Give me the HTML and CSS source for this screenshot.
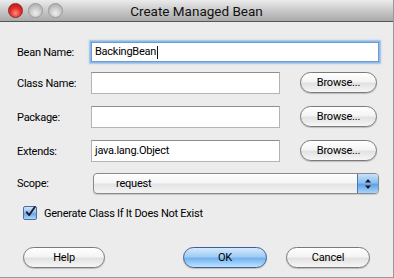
FILE: index.html
```html
<!DOCTYPE html>
<html>
<head>
<meta charset="utf-8">
<link rel="stylesheet" href="styles.css">
</head>
<body>
<div class="window">
  <div class="titlebar">
    <div class="lights">
      <span class="light red"></span>
      <span class="light gray"></span>
      <span class="light gray"></span>
    </div>
    <div class="title">Create Managed Bean</div>
  </div>
  <div class="content">
    <div class="row r1">
      <label class="lbl">Bean Name:</label>
      <div class="field wide focus">BackingBean<span class="caret"></span></div>
    </div>
    <div class="row r2">
      <label class="lbl">Class Name:</label>
      <div class="field"></div>
      <div class="btn browse">Browse...</div>
    </div>
    <div class="row r3">
      <label class="lbl">Package:</label>
      <div class="field"></div>
      <div class="btn browse">Browse...</div>
    </div>
    <div class="row r4">
      <label class="lbl">Extends:</label>
      <div class="field">java.lang.Object</div>
      <div class="btn browse">Browse...</div>
    </div>
    <div class="row r5">
      <label class="lbl">Scope:</label>
      <div class="select">
        <span class="sel-text">request</span>
        <span class="stepper">
          <svg width="8" height="12" viewBox="0 0 8 12"><path d="M4 1 L7 4.5 L1 4.5 Z M4 11 L7 7.5 L1 7.5 Z" fill="#1a1a1a"/></svg>
        </span>
      </div>
    </div>
    <div class="check-row">
      <span class="checkbox">
        <svg width="14" height="14" viewBox="0 0 14 14"><path d="M3.2 7.2 L6 10.6 L12.6 1.2" fill="none" stroke="#1b1f3a" stroke-width="2.2" stroke-linecap="round" stroke-linejoin="round"/></svg>
      </span>
      <span class="check-text">Generate Class If It Does Not Exist</span>
    </div>
    <div class="actions">
      <div class="btn help">Help</div>
      <div class="spacer"></div>
      <div class="btn ok">OK</div>
      <div class="btn cancel">Cancel</div>
    </div>
  </div>
</div>
</body>
</html>
```
FILE: styles.css
```css
html, body {
  margin: 0;
  padding: 0;
}
body {
  width: 394px;
  height: 278px;
  overflow: hidden;
  font-family: Roboto, "Liberation Sans", sans-serif;
  font-size: 11px;
  color: #000;
}
.window {
  width: 394px;
  height: 278px;
  box-sizing: border-box;
  background: #ececec;
  border-right: 1px solid #9a9a9a;
  border-bottom: 1px solid #9a9a9a;
  display: flex;
  flex-direction: column;
}
.titlebar {
  height: 22px;
  box-sizing: border-box;
  background: linear-gradient(#ebebeb, #c9c9c9 50%, #a9a9a9);
  border-bottom: 1px solid #565656;
  position: relative;
  display: flex;
  align-items: center;
}
.lights {
  display: flex;
  gap: 5px;
  padding-left: 8px;
}
.light {
  width: 15px;
  height: 15px;
  border-radius: 50%;
  box-sizing: border-box;
}
.light.red {
  background: radial-gradient(circle at 50% 70%, #ff8c86 0%, #e8302a 45%, #a5120d 100%);
  border: 1px solid #8c2a26;
}
.light.gray {
  background: radial-gradient(circle at 50% 70%, #eeeeee 0%, #c8c8c8 50%, #a0a0a0 100%);
  border: 1px solid #9a9a9a;
}
.title {
  position: absolute;
  left: 0;
  right: 0;
  top: 3px;
  text-align: center;
  font-size: 13.5px;
  color: #111;
}
.content {
  padding-left: 17px;
  flex: 1;
  display: flex;
  flex-direction: column;
}
.row {
  display: flex;
  align-items: center;
}
.r1 { margin-top: 20px; height: 20px; }
.r2 { margin-top: 10px; height: 22px; }
.r3 { margin-top: 12px; height: 22px; }
.r4 { margin-top: 12px; height: 22px; }
.r5 { margin-top: 11px; height: 21px; }
.lbl {
  width: 74px;
  flex: none;
  letter-spacing: -0.25px;
}
.field {
  width: 189px;
  height: 22px;
  box-sizing: border-box;
  background: #fff;
  border: 1px solid #b4b4b4;
  border-top-color: #8e8e8e;
  padding-left: 3px;
  line-height: 20px;
  letter-spacing: -0.25px;
  flex: none;
}
.field.wide {
  width: 288px;
  height: 20px;
  line-height: 18px;
  border: 1px solid #6d9cd4;
  box-shadow: 0 0 0 1.5px #8fb8e6, 0 0 2px 2px #b6d2f0;
}
.caret {
  display: inline-block;
  width: 1px;
  height: 13px;
  background: #111;
  vertical-align: middle;
  margin-left: 1px;
}
.btn {
  box-sizing: border-box;
  height: 21px;
  border-radius: 11px;
  border: 1px solid #7a7a7a;
  background: linear-gradient(#ffffff, #f4f4f4 45%, #e2e2e2 55%, #f6f6f6);
  box-shadow: 0 1px 1px rgba(0,0,0,0.2);
  text-align: center;
  line-height: 19px;
  letter-spacing: -0.2px;
  flex: none;
}
.browse {
  width: 77px;
  margin-left: 20px;
  align-self: flex-start;
}
.select {
  width: 286px;
  height: 21px;
  margin-left: 2px;
  box-sizing: border-box;
  border: 1px solid #8a8a8a;
  border-radius: 4px;
  background: linear-gradient(#ffffff, #f5f5f5 45%, #e4e4e4 55%, #f4f4f4);
  box-shadow: 0 1px 1px rgba(0,0,0,0.15);
  display: flex;
  align-items: center;
  overflow: hidden;
}
.sel-text {
  flex: 1;
  padding-left: 22px;
  letter-spacing: -0.2px;
}
.stepper {
  width: 20px;
  height: 100%;
  background: linear-gradient(#c9e1fa, #8ebfef 45%, #5ea2e6 55%, #a9d3fb);
  border-left: 1px solid #4a78b4;
  display: flex;
  align-items: center;
  justify-content: center;
}
.check-row {
  display: flex;
  align-items: center;
  margin-top: 11px;
  margin-left: 6px;
  height: 16px;
}
.checkbox {
  width: 14px;
  height: 14px;
  box-sizing: border-box;
  border: 1px solid #4d6f9e;
  border-radius: 2px;
  background: linear-gradient(#cfe4fa, #8ebcec 50%, #6aa6e6 55%, #b0d6fb);
  display: flex;
  margin-right: 7px;
}
.checkbox svg {
  margin-top: -2px;
}
.check-text {
  letter-spacing: -0.25px;
}
.actions {
  display: flex;
  margin-top: 26px;
  margin-left: 6px;
  height: 21px;
}
.help { width: 82px; }
.spacer { width: 78px; }
.ok {
  width: 84px;
  border-color: #3e5f95;
  background: linear-gradient(#d5e9fc, #a0ccf5 45%, #72b3f0 55%, #bfe2fd);
}
.cancel {
  width: 84px;
  margin-left: 19px;
}
```
